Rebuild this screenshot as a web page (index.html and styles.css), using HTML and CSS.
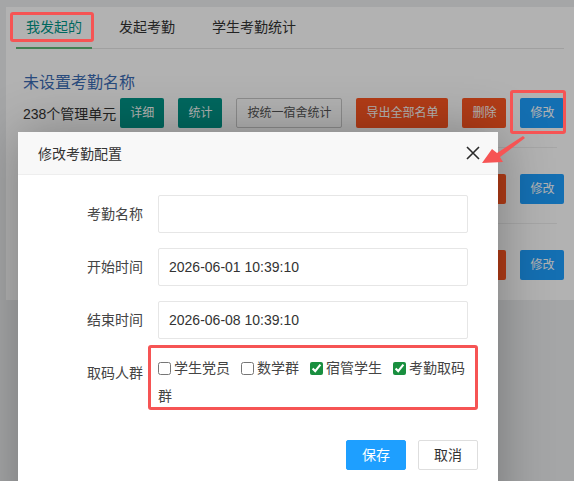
FILE: index.html
```html
<!DOCTYPE html>
<html lang="zh-CN">
<head>
  <meta charset="UTF-8" />
  <title>我发起的考勤</title>
  <link rel="stylesheet" href="styles.css">
</head>
<body>
  <div class="card">
    <ul class="tabs">
      <li class="active">我发起的</li>
      <li>发起考勤</li>
      <li>学生考勤统计</li>
    </ul>

    <div class="list">
      <div class="item">
        <div class="item-title">未设置考勤名称</div>
        <div class="item-ops">
          <span class="count">238个管理单元</span>
          <a class="btn btn-teal">详细</a>
          <a class="btn btn-teal">统计</a>
          <a class="btn btn-plain">按统一宿舍统计</a>
          <a class="btn btn-warm">导出全部名单</a>
          <a class="btn btn-warm">删除</a>
          <a class="btn btn-blue">修改</a>
        </div>
      </div>
      <div class="item">
        <div class="item-title">未设置考勤名称</div>
        <div class="item-ops">
          <span class="count">238个管理单元</span>
          <a class="btn btn-teal">详细</a>
          <a class="btn btn-teal">统计</a>
          <a class="btn btn-plain">按统一宿舍统计</a>
          <a class="btn btn-warm">导出全部名单</a>
          <a class="btn btn-warm">删除</a>
          <a class="btn btn-blue">修改</a>
        </div>
      </div>
      <div class="item">
        <div class="item-title">未设置考勤名称</div>
        <div class="item-ops">
          <span class="count">238个管理单元</span>
          <a class="btn btn-teal">详细</a>
          <a class="btn btn-teal">统计</a>
          <a class="btn btn-plain">按统一宿舍统计</a>
          <a class="btn btn-warm">导出全部名单</a>
          <a class="btn btn-warm">删除</a>
          <a class="btn btn-blue">修改</a>
        </div>
      </div>
    </div>
  </div>

  <div class="shade"></div>

  <div class="layer">
    <div class="layer-title">
      <span>修改考勤配置</span>
      <svg class="layer-close" width="14" height="14" viewBox="0 0 14 14">
        <path d="M1 1 L13 13 M13 1 L1 13" stroke="#2b2b2b" stroke-width="1.6" fill="none" />
      </svg>
    </div>

    <form class="form">
      <div class="form-item">
        <label class="form-label">考勤名称</label>
        <div class="form-block"><input class="input" type="text" value=""></div>
      </div>
      <div class="form-item">
        <label class="form-label">开始时间</label>
        <div class="form-block"><input class="input" type="text" value="2026-06-01 10:39:10"></div>
      </div>
      <div class="form-item">
        <label class="form-label">结束时间</label>
        <div class="form-block"><input class="input" type="text" value="2026-06-08 10:39:10"></div>
      </div>
      <div class="form-item">
        <label class="form-label">取码人群</label>
        <div class="form-block checks"><label class="check"><input type="checkbox">学生党员</label><label class="check"><input type="checkbox">数学群</label><label class="check"><input type="checkbox" checked>宿管学生</label><label class="check"><input type="checkbox" checked>考勤取码群</label></div>
      </div>
    </form>

    <div class="layer-btns">
      <a class="lbtn lbtn-primary">保存</a>
      <a class="lbtn">取消</a>
    </div>
  </div>

  <!-- annotations drawn over the screenshot -->
  <div class="mark mark-tab"></div>
  <div class="mark mark-edit"></div>
  <div class="mark mark-checks"></div>
  <svg class="mark-arrow" width="56" height="40" viewBox="0 0 56 40">
    <polygon points="6,33 16,19 21,23 47,6 49,8 24,27 27,32" fill="#f65454" />
  </svg>
</body>
</html>
```

FILE: styles.css
```css
html, body {
  margin: 0;
  height: 100%;
  overflow: hidden;
}
body {
  background: #edeef0;
  font-family: "Liberation Sans", "Noto Sans CJK SC", sans-serif;
  font-size: 14px;
  color: #333;
  position: relative;
}
.card {
  margin: 7px 0 0 6px;
  height: 293px;
  padding: 0 10px;
  background: #fff;
}
.tabs {
  display: flex;
  gap: 17px;
  margin: 0;
  padding: 0;
  list-style: none;
  border-bottom: 1px solid #e6e6e6;
}
.tabs li {
  padding: 0 10px;
  line-height: 40px;
  border-bottom: 2px solid transparent;
  margin-bottom: -1px;
}
.tabs li.active {
  color: #009688;
  border-bottom-color: #5fb878;
}
.list {
  padding: 23px 7px 0;
}
.item {
  padding-bottom: 19px;
  border-bottom: 1px solid #eee;
}
.item:last-child {
  border-bottom: none;
}
.item-title {
  font-size: 16px;
  line-height: 22px;
  color: #3b6cb4;
}
.item-ops {
  display: flex;
  align-items: center;
  margin-top: 4px;
  height: 30px;
  white-space: nowrap;
}
.count {
  margin-right: 4px;
}
.btn {
  display: inline-block;
  box-sizing: border-box;
  height: 30px;
  line-height: 30px;
  padding: 0 10px;
  border-radius: 2px;
  font-size: 12px;
  color: #fff;
  margin-right: 14px;
}
.btn-teal {
  background: #009688;
}
.btn-plain {
  line-height: 28px;
  background: #fff;
  border: 1px solid #c9c9c9;
  color: #555;
}
.btn-warm {
  background: #ff5722;
}
.btn-blue {
  background: #1e9fff;
}
.shade {
  position: absolute;
  inset: 0;
  background: rgba(0, 0, 0, 0.3);
}
.layer {
  position: absolute;
  left: 18px;
  top: 132px;
  width: 480px;
  height: 400px;
  background: #fff;
  box-shadow: 1px 1px 50px rgba(0, 0, 0, 0.3);
}
.layer-title {
  display: flex;
  align-items: center;
  justify-content: space-between;
  height: 42px;
  padding: 0 18px 0 20px;
  background: #f8f8f8;
  border-bottom: 1px solid #eee;
  color: #333;
}
.form {
  padding: 20px 30px 0;
}
.form-item {
  display: flex;
  margin-bottom: 15px;
}
.form-label {
  width: 80px;
  padding: 9px 15px;
  line-height: 20px;
  text-align: right;
  color: #444;
}
.form-block {
  flex: 1;
}
.input {
  box-sizing: border-box;
  width: 100%;
  height: 38px;
  padding-left: 10px;
  border: 1px solid #e6e6e6;
  border-radius: 2px;
  font-family: "Liberation Sans", "Noto Sans CJK SC", sans-serif;
  font-size: 14px;
  color: #333;
}
.checks {
  line-height: 28px;
  color: #444;
}
.check {
  margin-right: 11px;
}
.check:last-child {
  margin-right: 0;
}
.check input {
  margin: 0 3px 0 0;
  width: 13px;
  height: 13px;
  vertical-align: -2px;
  accent-color: #198f3f;
}
.layer-btns {
  display: flex;
  justify-content: flex-end;
  gap: 12px;
  padding: 15px 20px 0 0;
}
.lbtn {
  box-sizing: border-box;
  height: 30px;
  line-height: 28px;
  padding: 0 15px;
  border: 1px solid #dedede;
  border-radius: 2px;
  background: #fff;
  color: #333;
}
.lbtn-primary {
  background: #1e9fff;
  border-color: #1e9fff;
  color: #fff;
}
.mark {
  position: absolute;
  box-sizing: border-box;
  border: 3px solid #f65454;
  border-radius: 3px;
}
.mark-tab {
  left: 10px;
  top: 12px;
  width: 84px;
  height: 30px;
}
.mark-edit {
  left: 510px;
  top: 90px;
  width: 56px;
  height: 44px;
}
.mark-checks {
  left: 148px;
  top: 345px;
  width: 330px;
  height: 65px;
}
.mark-arrow {
  position: absolute;
  left: 476px;
  top: 130px;
}
```
